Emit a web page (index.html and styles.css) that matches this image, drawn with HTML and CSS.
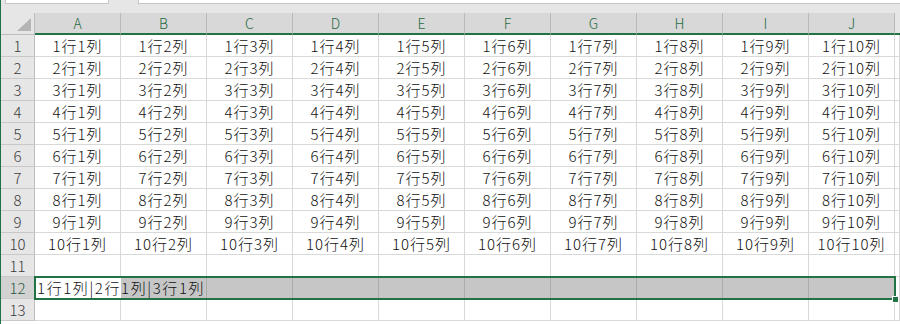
FILE: index.html
```html
<!DOCTYPE html>
<html lang="ja">
<head>
<meta charset="utf-8">
<link rel="stylesheet" href="styles.css">
</head>
<body>
<div class="app">
  <div class="topbar">
    <div class="namebox"></div>
    <div class="formula"></div>
  </div>
  <div class="sheet">
    <div class="corner"><span class="tri"></span></div>
    <div class="colh">A</div><div class="colh">B</div><div class="colh">C</div><div class="colh">D</div><div class="colh">E</div><div class="colh">F</div><div class="colh">G</div><div class="colh">H</div><div class="colh">I</div><div class="colh">J</div><div class="colh k"></div>

    <div class="rowh">1</div><div class="c">1行1列</div><div class="c">1行2列</div><div class="c">1行3列</div><div class="c">1行4列</div><div class="c">1行5列</div><div class="c">1行6列</div><div class="c">1行7列</div><div class="c">1行8列</div><div class="c">1行9列</div><div class="c">1行10列</div><div class="c"></div>
    <div class="rowh">2</div><div class="c">2行1列</div><div class="c">2行2列</div><div class="c">2行3列</div><div class="c">2行4列</div><div class="c">2行5列</div><div class="c">2行6列</div><div class="c">2行7列</div><div class="c">2行8列</div><div class="c">2行9列</div><div class="c">2行10列</div><div class="c"></div>
    <div class="rowh">3</div><div class="c">3行1列</div><div class="c">3行2列</div><div class="c">3行3列</div><div class="c">3行4列</div><div class="c">3行5列</div><div class="c">3行6列</div><div class="c">3行7列</div><div class="c">3行8列</div><div class="c">3行9列</div><div class="c">3行10列</div><div class="c"></div>
    <div class="rowh">4</div><div class="c">4行1列</div><div class="c">4行2列</div><div class="c">4行3列</div><div class="c">4行4列</div><div class="c">4行5列</div><div class="c">4行6列</div><div class="c">4行7列</div><div class="c">4行8列</div><div class="c">4行9列</div><div class="c">4行10列</div><div class="c"></div>
    <div class="rowh">5</div><div class="c">5行1列</div><div class="c">5行2列</div><div class="c">5行3列</div><div class="c">5行4列</div><div class="c">5行5列</div><div class="c">5行6列</div><div class="c">5行7列</div><div class="c">5行8列</div><div class="c">5行9列</div><div class="c">5行10列</div><div class="c"></div>
    <div class="rowh">6</div><div class="c">6行1列</div><div class="c">6行2列</div><div class="c">6行3列</div><div class="c">6行4列</div><div class="c">6行5列</div><div class="c">6行6列</div><div class="c">6行7列</div><div class="c">6行8列</div><div class="c">6行9列</div><div class="c">6行10列</div><div class="c"></div>
    <div class="rowh">7</div><div class="c">7行1列</div><div class="c">7行2列</div><div class="c">7行3列</div><div class="c">7行4列</div><div class="c">7行5列</div><div class="c">7行6列</div><div class="c">7行7列</div><div class="c">7行8列</div><div class="c">7行9列</div><div class="c">7行10列</div><div class="c"></div>
    <div class="rowh">8</div><div class="c">8行1列</div><div class="c">8行2列</div><div class="c">8行3列</div><div class="c">8行4列</div><div class="c">8行5列</div><div class="c">8行6列</div><div class="c">8行7列</div><div class="c">8行8列</div><div class="c">8行9列</div><div class="c">8行10列</div><div class="c"></div>
    <div class="rowh">9</div><div class="c">9行1列</div><div class="c">9行2列</div><div class="c">9行3列</div><div class="c">9行4列</div><div class="c">9行5列</div><div class="c">9行6列</div><div class="c">9行7列</div><div class="c">9行8列</div><div class="c">9行9列</div><div class="c">9行10列</div><div class="c"></div>
    <div class="rowh">10</div><div class="c">10行1列</div><div class="c">10行2列</div><div class="c">10行3列</div><div class="c">10行4列</div><div class="c">10行5列</div><div class="c">10行6列</div><div class="c">10行7列</div><div class="c">10行8列</div><div class="c">10行9列</div><div class="c">10行10列</div><div class="c"></div>
    <div class="rowh">11</div><div class="c"></div><div class="c"></div><div class="c"></div><div class="c"></div><div class="c"></div><div class="c"></div><div class="c"></div><div class="c"></div><div class="c"></div><div class="c"></div><div class="c"></div>
    <div class="rowh on">12</div><div class="c active">1行1列|2行1列|3行1列</div><div class="c s"></div><div class="c s"></div><div class="c s"></div><div class="c s"></div><div class="c s"></div><div class="c s"></div><div class="c s"></div><div class="c s"></div><div class="c s last"></div><div class="c"></div>
    <div class="rowh">13</div><div class="c"></div><div class="c"></div><div class="c"></div><div class="c"></div><div class="c"></div><div class="c"></div><div class="c"></div><div class="c"></div><div class="c"></div><div class="c"></div><div class="c"></div>

    <div class="sel"><span class="handle"></span></div>
  </div>
</div>
</body>
</html>
```
FILE: styles.css
```css
* { box-sizing: border-box; }
html, body { margin: 0; padding: 0; background: #ffffff; overflow: hidden; }
body { width: 900px; height: 324px; }
.app {
  border-left: 1px solid #217346;
  height: 324px;
  overflow: hidden;
  font-family: "Noto Sans CJK JP", "Noto Sans", sans-serif;
}
.topbar {
  height: 13px;
  background: #e6e6e6;
  display: flex;
  align-items: flex-start;
}
.namebox {
  margin-left: 4px;
  width: 104px;
  height: 4px;
  background: #fff;
  border: 1px solid #c6c6c6;
  border-top: 0;
}
.formula {
  margin-left: 29px;
  flex: 1;
  height: 4px;
  background: #fff;
  border: 1px solid #c6c6c6;
  border-top: 0;
  border-right: 0;
}
.sheet {
  position: relative;
  display: grid;
  grid-template-columns: 34px repeat(10, 86px) 1fr;
  grid-auto-rows: 22px;
}
.corner {
  background: #e6e6e6;
  border-right: 1px solid #bdbdbd;
  border-bottom: 1px solid #bdbdbd;
  display: flex;
  align-items: flex-end;
  justify-content: flex-end;
  padding: 0 3px 3px 0;
}
.tri {
  width: 0;
  height: 0;
  border-left: 14px solid transparent;
  border-bottom: 13px solid #b4b4b4;
}
.colh {
  background: #d8d8d8;
  border-right: 1px solid #bababa;
  border-bottom: 2px solid #217346;
  color: #1e6b40;
  font-size: 14px;
  line-height: 20px;
  text-align: center;
  font-weight: 300;
}
.colh.k { background: #e6e6e6; border-right: 0; }
.rowh {
  background: #e6e6e6;
  border-right: 1px solid #bdbdbd;
  border-bottom: 1px solid #c8c8c8;
  color: #3c3c3c;
  font-size: 15px;
  line-height: 21px;
  text-align: center;
  font-weight: 300;
}
.rowh.on { background: #d2d2d2; color: #2a5b3d; }
.c {
  border-right: 1px solid #d9d9d9;
  border-bottom: 1px solid #d9d9d9;
  font-size: 15px;
  letter-spacing: 1px;
  line-height: 21px;
  text-align: center;
  color: #111;
  white-space: nowrap;
  font-weight: 300;
}
.c.active {
  text-align: left;
  padding-left: 2px;
  letter-spacing: 1.6px;
  border-right: 0;
  position: relative;
  z-index: 1;
}
.c.s { background: #c6c6c6; border-right-color: #acacac; border-bottom-color: #c6c6c6; }
.sel {
  position: absolute;
  left: 33px;
  top: 263px;
  width: 862px;
  height: 24px;
  border: 2px solid #217346;
  z-index: 2;
}
.handle {
  position: absolute;
  right: -5px;
  bottom: -5px;
  width: 7px;
  height: 7px;
  background: #217346;
  border: 1px solid #fff;
}
```
